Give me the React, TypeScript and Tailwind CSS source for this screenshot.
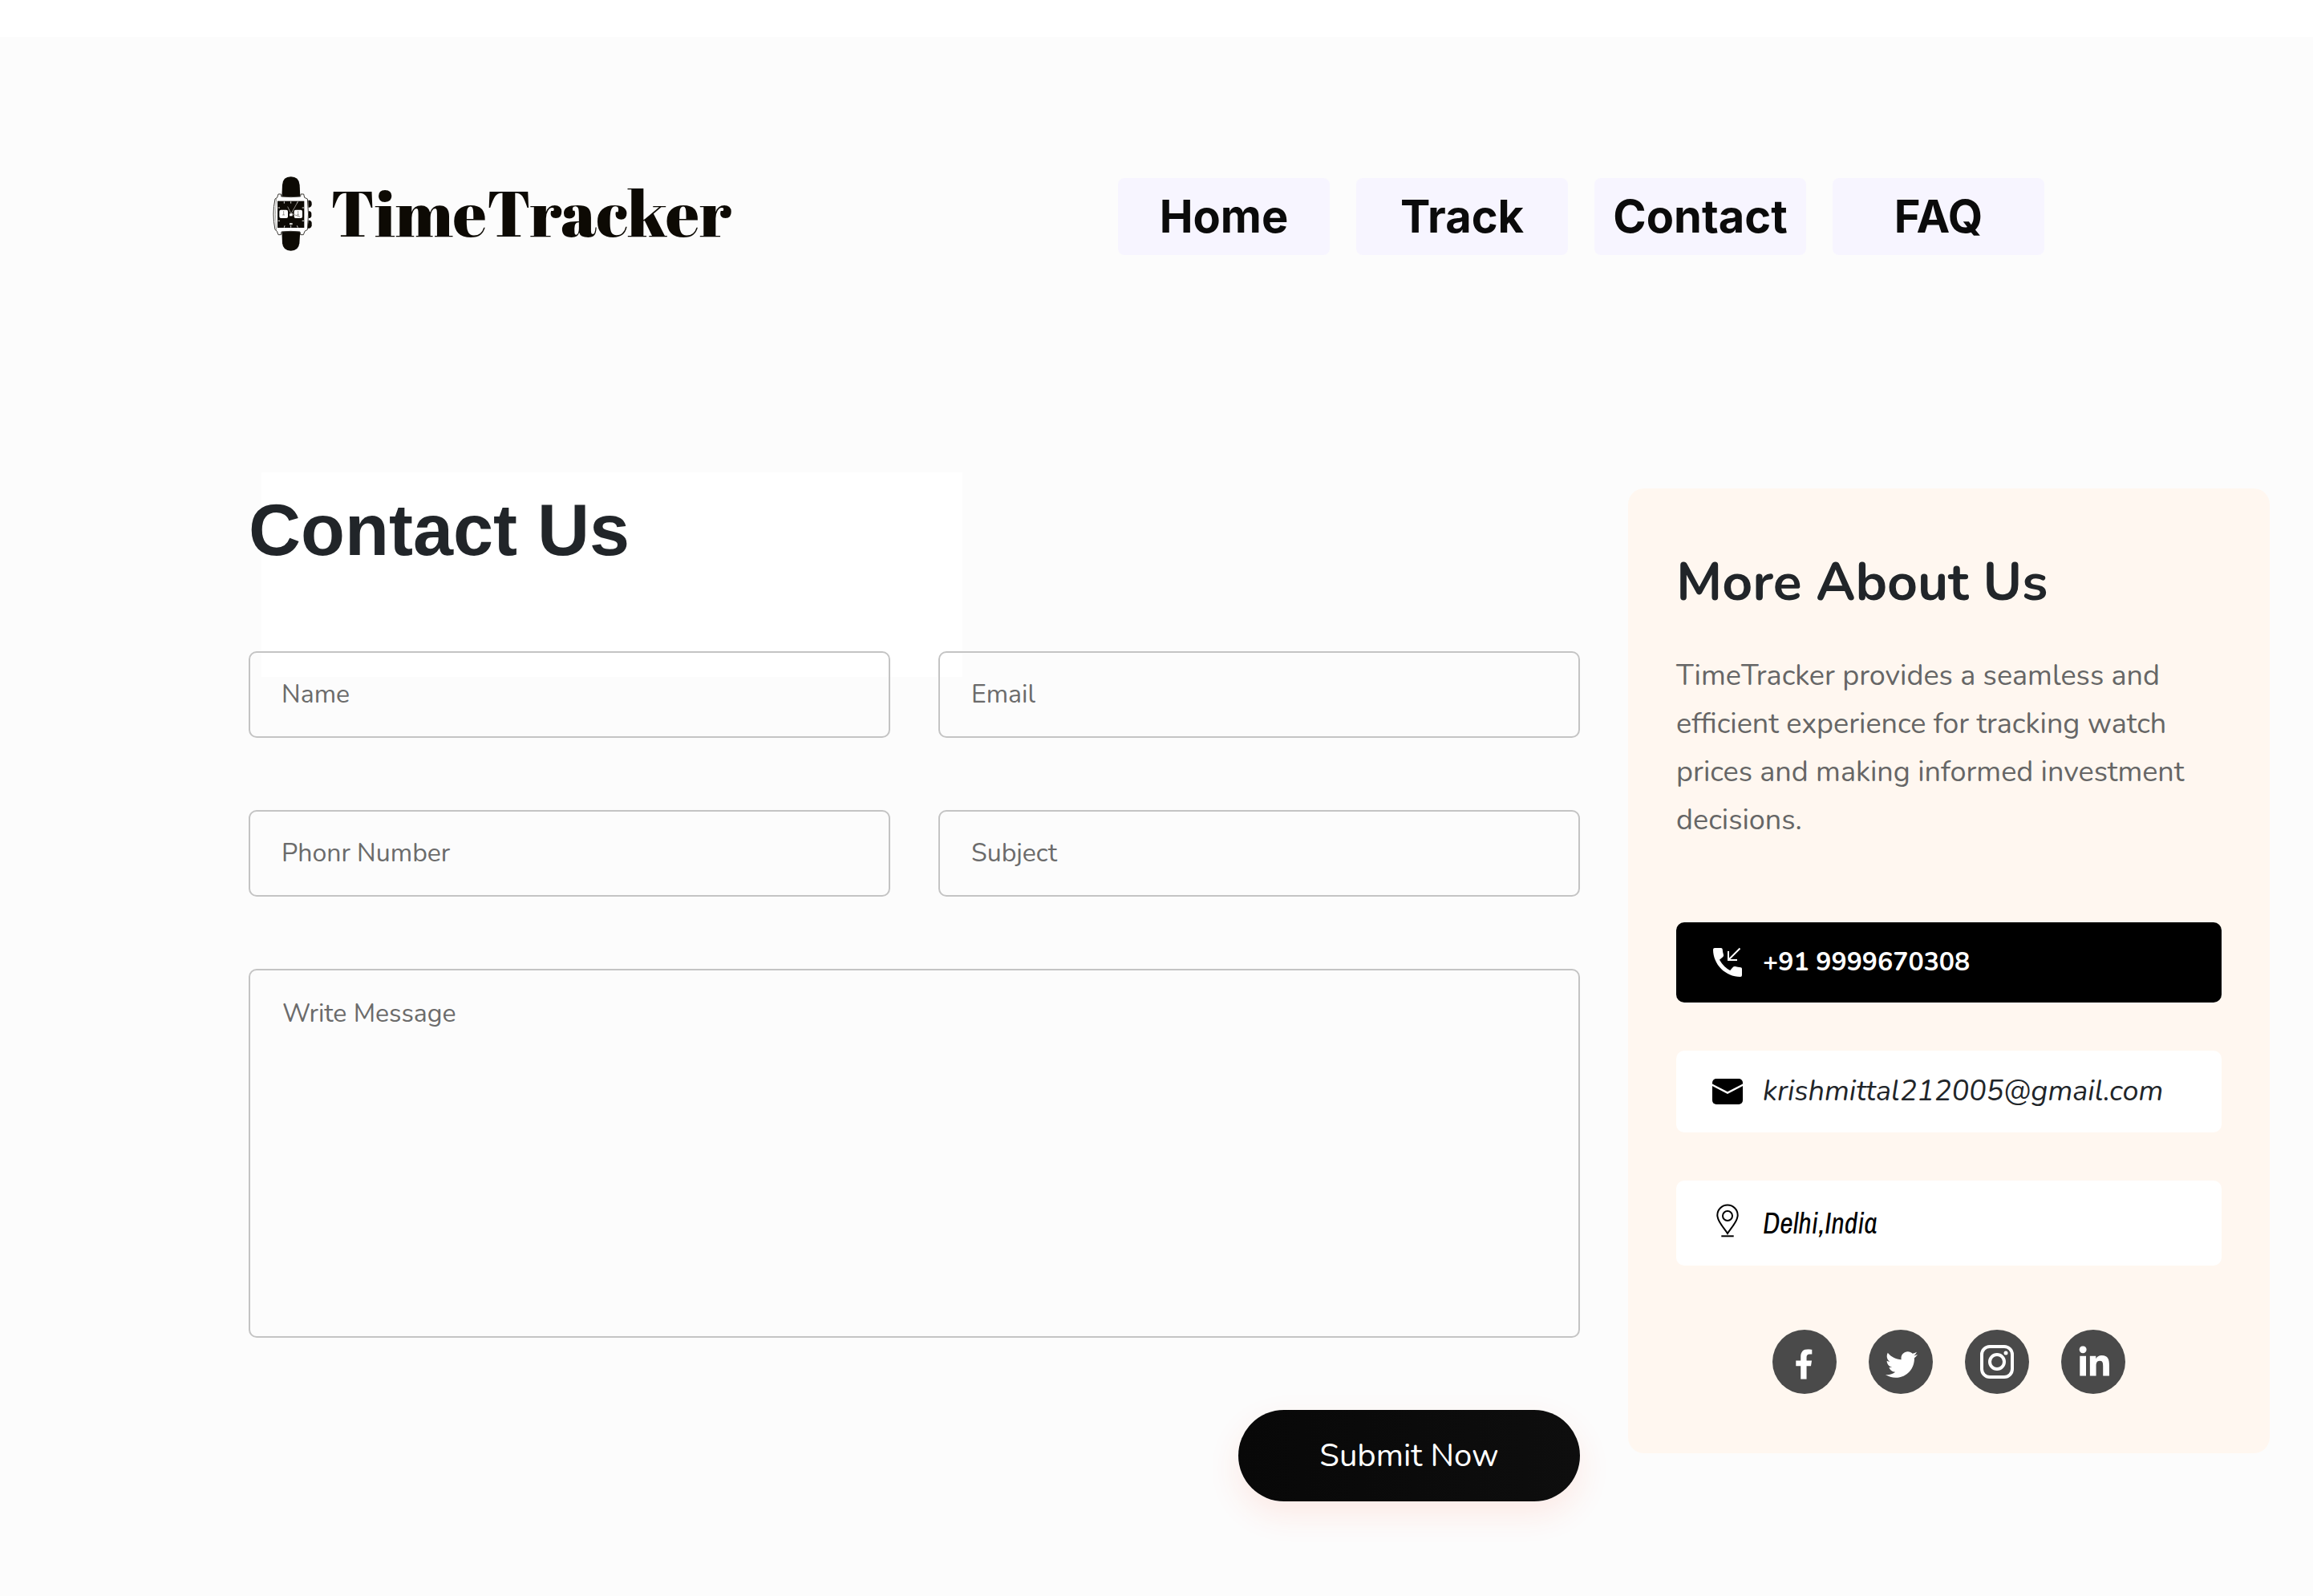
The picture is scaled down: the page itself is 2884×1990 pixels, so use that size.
import type { ReactNode } from "react";
import { FaFacebookF, FaLinkedinIn, FaTwitter } from "react-icons/fa";

const navItems = ["Home", "Track", "Contact", "FAQ"];

const fields = [
  { id: "name", label: "Name", type: "text" },
  { id: "email", label: "Email", type: "email" },
  { id: "phone", label: "Phonr Number", type: "tel" },
  { id: "subject", label: "Subject", type: "text" },
];

function WatchLogo() {
  return (
    <svg viewBox="0 15 210 330" className="h-[110px] w-[70px] shrink-0" aria-hidden="true">
      <g fill="#0d0a04">
        <path d="M64 107 L66 62 Q68 31 98 31 Q128 31 131 62 L133 107 Z" />
        <path d="M64 233 L66 280 Q69 308 98 308 Q127 308 130 280 L133 233 Z" />
        <path d="M163 119 h6 q7 3 7 10 v8 q-2 7 -9 9 h-4 z" />
        <path d="M164 160 h5 q6 3 6 8 v10 q-1 6 -6 8 h-5 z" />
        <path d="M163 194 h6 q7 3 7 9 v12 q-2 7 -9 9 h-6 z" />
      </g>
      <path
        d="M51 96 h10 l1 9 q36 4 72 0 l1 -9 h11 l3 13 l11 5 q7 56 0 115 l-10 6 l-5 13 h-11 l-2 -11 q-35 -4 -69 0 l-2 11 h-10 l-5 -13 l-7 -6 q-12 -58 0 -115 l8 -5 z"
        fill="#fff"
        stroke="#3c3a35"
        strokeWidth="3"
      />
      <path d="M44 111 q-8 60 0 122" fill="none" stroke="#77756f" strokeWidth="2" />
      <rect x="48" y="122" width="100" height="100" fill="#0d0a04" />
      <path
        d="M73 124 v7 M98 124 v7 M124 124 l-3 7 M50 147 h7 M140 147 h7 M50 196 h7 M140 196 h7 M73 221 l2 -7 M98 221 v-7 M124 221 l-3 -7"
        stroke="#e4e4e1"
        strokeWidth="3"
      />
      <rect x="55" y="155" width="32" height="31" rx="6" fill="#fff" />
      <rect x="110" y="155" width="31" height="31" rx="6" fill="#fff" />
      <path d="M71 159 v15 M125 159 v15 M66 174 h9 M120 174 h9" stroke="#6b6963" strokeWidth="2" />
      <path d="M121 130 L100 168 M86 143 L98 168 L132 181" fill="none" stroke="#8d8b86" strokeWidth="3" />
      <rect x="93" y="169" width="11" height="9" fill="#fff" />
      <rect x="93" y="204" width="11" height="7" fill="#c9c8c4" />
    </svg>
  );
}

function PhoneIcon() {
  return (
    <svg viewBox="0 0 48 48" className="size-12 shrink-0" fill="none" aria-hidden="true">
      <path
        d="M8 6 H16 Q17.500 6 17.700 7.500 Q17.900 11.200 19 14.500 Q19.400 15.900 18.400 16.900 L14 20.800 Q19 29.800 27.200 34 L31.100 29.600 Q32.100 28.600 33.500 29 Q36.800 30.100 40.500 30.300 Q42 30.500 42 32 V40 Q42 42 40 42 C21.500 42 6 26.500 6 8 Q6 6 8 6 Z"
        fill="#fff"
      />
      <path d="M39.500 6.500 L25.500 20.500 M25 10 V21 H36" stroke="#fff" strokeWidth="2" />
    </svg>
  );
}

function MailIcon() {
  return (
    <svg viewBox="0 0 48 48" className="size-12 shrink-0" aria-hidden="true">
      <rect x="5" y="8" width="38" height="32" rx="5" fill="#000" />
      <path d="M4.500 15.500 L24 25.500 L43.500 15.500" fill="none" stroke="#fff" strokeWidth="2.500" />
    </svg>
  );
}

function PinIcon() {
  return (
    <svg viewBox="0 0 48 48" className="size-12 shrink-0" fill="none" stroke="#000" strokeWidth="2" aria-hidden="true">
      <path d="M24 37 C21 31.500 11.300 22.500 11.300 14.200 A12.700 12.700 0 0 1 36.700 14.200 C36.700 22.500 27 31.500 24 37 Z" />
      <circle cx="24" cy="15" r="6" />
      <path d="M16.300 40.300 H31.700" />
    </svg>
  );
}

function SocialLink({ label, children }: { label: string; children: ReactNode }) {
  return (
    <a href="#" aria-label={label} className="size-20 rounded-full bg-[#4a4a4a] text-white">
      <svg viewBox="0 0 80 80" className="size-20" aria-hidden="true">
        {children}
      </svg>
    </a>
  );
}

export default function App() {
  return (
    <div className="flex min-h-screen flex-col bg-white pt-[46px] font-['Nunito','Nunito_Sans','Lato',sans-serif] text-[#212529]">
      <div className="grow bg-[#fcfcfc] pb-[118px]">
        <header className="flex items-center justify-between pt-[169px] pr-[335px] pl-[330px]">
          <a href="#" className="flex items-start gap-3">
            <WatchLogo />
            <span className="font-['Abril_Fatface','Liberation_Serif',serif] text-[81px] leading-[98px] text-[#0d0a04]">
              TimeTracker
            </span>
          </a>
          <nav className="flex gap-[33px]">
            {navItems.map((item) => (
              <a
                key={item}
                href="#"
                className="flex h-24 w-[264px] items-center justify-center rounded-lg bg-[#f7f5ff] font-['Inter',sans-serif] text-[56px] leading-[68px] font-bold text-[#0b0b0b]"
              >
                {item}
              </a>
            ))}
          </nav>
        </header>

        <main className="mt-[284px] grid grid-cols-3 items-start gap-[60px] pr-[54px] pl-[310px]">
          <form className="relative isolate col-span-2" onSubmit={(e) => e.preventDefault()}>
            <div className="absolute -top-5 left-4 -z-10 h-[255px] w-[874px] bg-white" />
            <h1 className="mb-[99px] font-['Liberation_Sans',sans-serif] text-[90px] leading-[104px] font-bold">
              Contact Us
            </h1>
            <div className="grid grid-cols-2 gap-x-[60px] gap-y-[90px]">
              {fields.map((f) => (
                <input
                  key={f.id}
                  id={f.id}
                  name={f.id}
                  type={f.type}
                  aria-label={f.label}
                  placeholder={f.label}
                  className="h-[108px] w-full rounded-[10px] border-2 border-[#c4c4c4] px-[39px] pb-0.5 text-[32px] text-[#212529] placeholder:text-[#6b6b6b]"
                />
              ))}
              <textarea
                id="message"
                name="message"
                aria-label="Write Message"
                placeholder="Write Message"
                className="col-span-2 block h-[460px] w-full resize-none rounded-[10px] border-2 border-[#c4c4c4] px-10 py-8 text-[32px] leading-[44px] placeholder:text-[#6b6b6b]"
              />
              <button
                type="submit"
                className="col-start-2 h-[114px] w-[426px] justify-self-end rounded-full bg-linear-to-r from-[#080808] to-[#0e0e0e] text-[40px] leading-[56px] text-white shadow-[0_16px_40px_rgba(255,70,30,0.1)]"
              >
                Submit Now
              </button>
            </div>
          </form>

          <aside className="rounded-[20px] bg-[#fff7f0] px-[60px] pt-[67px] pb-[74px]">
            <h2 className="text-[66px] leading-[100px] font-bold">More About Us</h2>
            <p className="mt-[37px] text-[36px] leading-[60px] text-[#666]">
              TimeTracker provides a seamless and efficient experience for tracking watch prices and making informed
              investment decisions.
            </p>
            <address className="mt-[97px] flex flex-col gap-[60px] not-italic">
              <a
                href="tel:+919999670308"
                className="flex h-[100px] items-center gap-5 rounded-[10px] bg-black px-10 text-[32px] font-bold text-white"
              >
                <PhoneIcon />
                +91 9999670308
              </a>
              <a
                href="mailto:krishmittal212005@gmail.com"
                className="flex h-[102px] items-center gap-5 rounded-[10px] bg-white px-10 text-[36px] italic"
              >
                <MailIcon />
                krishmittal212005@gmail.com
              </a>
              <div className="flex h-[106px] items-center gap-5 rounded-[10px] bg-white px-10 font-['Liberation_Sans_Narrow','Arial_Narrow','Archivo_Narrow','Roboto_Condensed','Open_Sans_Condensed','Liberation_Sans',sans-serif] text-[36px] text-black italic">
                <PinIcon />
                Delhi,India
              </div>
            </address>
            <div className="mt-20 flex justify-center gap-10">
              <SocialLink label="Facebook">
                <FaFacebookF x="20.600" y="24.300" size="37.400" />
              </SocialLink>
              <SocialLink label="Twitter">
                <FaTwitter x="21" y="23.500" size="40" />
              </SocialLink>
              <SocialLink label="Instagram">
                <g fill="none" stroke="currentColor" strokeWidth="4">
                  <rect x="21" y="21" width="38" height="38" rx="10" />
                  <circle cx="40" cy="40" r="9" />
                </g>
                <circle cx="51" cy="29" r="2.500" fill="currentColor" />
              </SocialLink>
              <SocialLink label="LinkedIn">
                <FaLinkedinIn x="20" y="20.300" size="42.600" />
              </SocialLink>
            </div>
          </aside>
        </main>
      </div>
    </div>
  );
}
